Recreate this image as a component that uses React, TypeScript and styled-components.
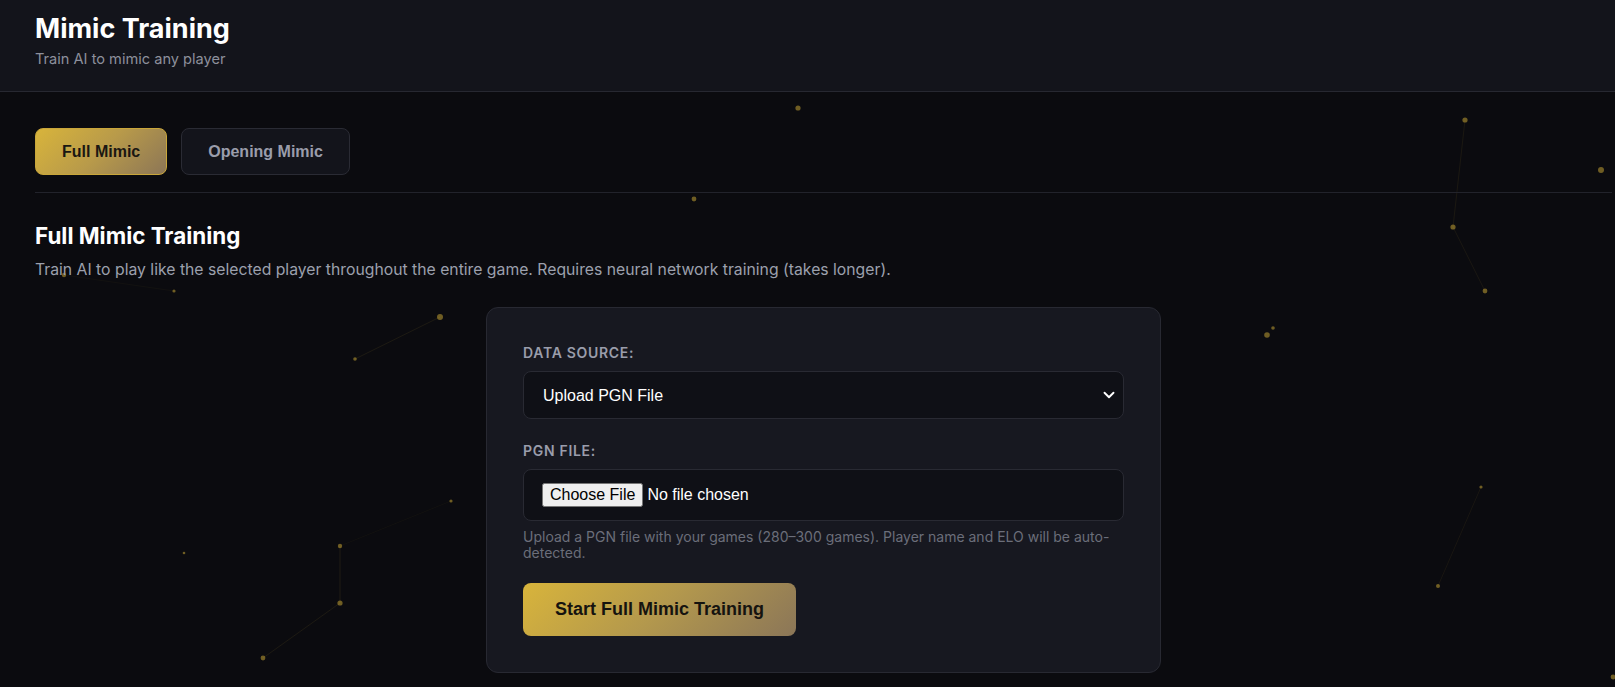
import { styled, createGlobalStyle } from "styled-components";
import { ChevronDown } from "lucide-react";

const GlobalStyle = createGlobalStyle`
  html, body {
    margin: 0;
    padding: 0;
    background: #0b0b0f;
  }
  body {
    font-family: Inter, "Noto Sans", sans-serif;
    color: #ffffff;
  }
  * {
    box-sizing: border-box;
  }
`;

const dots = [
  { x: 798, y: 108, r: 2.6 },
  { x: 1465, y: 120, r: 2.6 },
  { x: 1601, y: 170, r: 3 },
  { x: 694, y: 199, r: 2.4 },
  { x: 1453, y: 227, r: 2.6 },
  { x: 1485, y: 291, r: 2.4 },
  { x: 64, y: 275, r: 2.2 },
  { x: 174, y: 291, r: 1.6 },
  { x: 440, y: 317, r: 3 },
  { x: 355, y: 359, r: 1.8 },
  { x: 1267, y: 335, r: 2.8 },
  { x: 1273, y: 328, r: 1.8 },
  { x: 451, y: 501, r: 1.6 },
  { x: 340, y: 546, r: 2.2 },
  { x: 340, y: 603, r: 2.6 },
  { x: 263, y: 658, r: 2.4 },
  { x: 184, y: 553, r: 1.3 },
  { x: 1481, y: 487, r: 1.6 },
  { x: 1438, y: 586, r: 2 },
  { x: 1613, y: 677, r: 2.4 },
];

// [from, to, opacity]
const links = [
  [1, 4, 0.08],
  [4, 5, 0.08],
  [6, 7, 0.04],
  [8, 9, 0.09],
  [12, 13, 0.04],
  [13, 14, 0.1],
  [14, 15, 0.09],
  [17, 18, 0.07],
];

const Page = styled.div`
  position: relative;
  min-height: 100vh;
  overflow: hidden;
`;

const Particles = styled.svg`
  position: absolute;
  inset: 0;
  width: 100%;
  height: 100%;
  pointer-events: none;
  z-index: 0;
`;

const Header = styled.header`
  position: relative;
  z-index: 1;
  background: #13141b;
  border-bottom: 1px solid #272831;
  padding: 12px 35px 23px;
  h1 {
    margin: 0 0 5px;
    font-size: 27px;
    font-weight: 700;
    line-height: 34px;
    color: #ffffff;
  }
  p {
    margin: 0;
    font-size: 14.6px;
    line-height: 17px;
    color: #8d909c;
  }
`;

const Main = styled.main`
  position: relative;
  z-index: 1;
  padding: 36px 3px 40px 35px;
`;

const TabBar = styled.div`
  display: flex;
  gap: 14px;
  padding-bottom: 17px;
  border-bottom: 1px solid #22232b;
`;

const Tab = styled.button<{ $active?: boolean }>`
  font-family: "Liberation Sans", Arial, sans-serif;
  font-size: 16px;
  font-weight: 700;
  line-height: 19px;
  padding: 13px 26px;
  border-radius: 8px;
  cursor: pointer;
  border: 1px solid ${(p) => (p.$active ? "#c9a63a" : "#2a2b34")};
  background: ${(p) =>
    p.$active
      ? "linear-gradient(135deg, #d8b43b 0%, #b89a4a 50%, #8c7656 100%)"
      : "#13141b"};
  color: ${(p) => (p.$active ? "#1a1712" : "#9a9dab")};
`;

const Section = styled.section`
  padding-top: 29px;
  h2 {
    margin: 0 0 11px;
    font-size: 22.4px;
    font-weight: 700;
    line-height: 27px;
    color: #ffffff;
  }
  > p {
    margin: 0;
    font-size: 15.75px;
    line-height: 19px;
    color: #9ca0ad;
  }
`;

const Card = styled.div`
  width: 675px;
  margin: 28px auto 0;
  background: #171820;
  border: 1px solid #282932;
  border-radius: 12px;
  padding: 36px;
`;

const Field = styled.div`
  margin-bottom: 23px;
`;

const Label = styled.label`
  display: block;
  font-size: 14px;
  font-weight: 600;
  letter-spacing: 0.7px;
  line-height: 17px;
  text-transform: uppercase;
  color: #9a9dab;
  margin-bottom: 10px;
`;

const SelectWrap = styled.div`
  position: relative;
  svg {
    position: absolute;
    right: 6px;
    top: 50%;
    transform: translateY(-50%);
    color: #ffffff;
    pointer-events: none;
  }
`;

const Select = styled.select`
  appearance: none;
  width: 100%;
  height: 48px;
  padding: 0 19px;
  font-family: "Liberation Sans", Arial, sans-serif;
  font-size: 16px;
  color: #ffffff;
  background: #0f1016;
  border: 1px solid #292a33;
  border-radius: 8px;
  outline: none;
`;

const FileBox = styled.div`
  height: 52px;
  padding: 0 18px;
  display: flex;
  align-items: center;
  background: #0f1016;
  border: 1px solid #292a33;
  border-radius: 8px;
  input {
    font-family: "Liberation Sans", Arial, sans-serif;
    font-size: 16px;
    color: #ffffff;
  }
`;

const Hint = styled.p`
  margin: 8px 0 0;
  font-size: 14px;
  line-height: 15.5px;
  color: #6b6e7a;
`;

const StartButton = styled.button`
  margin-top: 23px;
  font-family: "Liberation Sans", Arial, sans-serif;
  font-size: 18px;
  font-weight: 700;
  line-height: 21px;
  padding: 16px 32px;
  border: none;
  border-radius: 8px;
  cursor: pointer;
  color: #15130f;
  background: linear-gradient(135deg, #d8b43b 0%, #b3984d 50%, #8b7658 100%);
`;

export default function App() {
  return (
    <Page>
      <GlobalStyle />
      <Particles>
        {links.map(([a, b, o], i) => (
          <line
            key={i}
            x1={dots[a].x}
            y1={dots[a].y}
            x2={dots[b].x}
            y2={dots[b].y}
            stroke="#d4af37"
            strokeOpacity={o}
            strokeWidth={1}
          />
        ))}
        {dots.map((d, i) => (
          <circle key={i} cx={d.x} cy={d.y} r={d.r} fill="#d4af37" fillOpacity={0.5} />
        ))}
      </Particles>
      <Header>
        <h1>Mimic Training</h1>
        <p>Train AI to mimic any player</p>
      </Header>
      <Main>
        <TabBar>
          <Tab $active>Full Mimic</Tab>
          <Tab>Opening Mimic</Tab>
        </TabBar>
        <Section>
          <h2>Full Mimic Training</h2>
          <p>
            Train AI to play like the selected player throughout the entire game. Requires neural
            network training (takes longer).
          </p>
          <Card>
            <Field>
              <Label>Data Source:</Label>
              <SelectWrap>
                <Select defaultValue="pgn">
                  <option value="pgn">Upload PGN File</option>
                  <option value="lichess">Lichess Username</option>
                </Select>
                <ChevronDown size={18} strokeWidth={2.5} />
              </SelectWrap>
            </Field>
            <div>
              <Label>PGN File:</Label>
              <FileBox>
                <input type="file" accept=".pgn" />
              </FileBox>
              <Hint>
                Upload a PGN file with your games (280–300 games). Player name and ELO will be
                auto-detected.
              </Hint>
            </div>
            <StartButton>Start Full Mimic Training</StartButton>
          </Card>
        </Section>
      </Main>
    </Page>
  );
}
